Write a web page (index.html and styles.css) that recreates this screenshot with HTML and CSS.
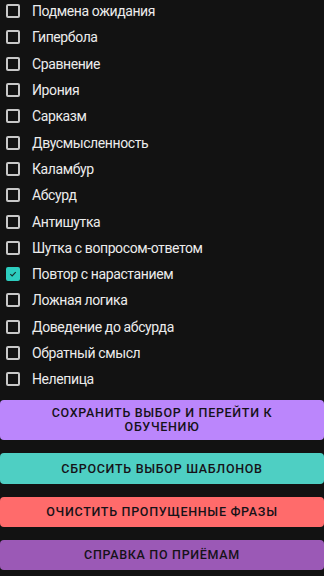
FILE: index.html
```html
<!DOCTYPE html>
<html lang="ru">
<head>
  <meta charset="UTF-8">
  <meta name="viewport" content="width=device-width, initial-scale=1.0">
  <title>Выбор шаблонов</title>
  <link rel="stylesheet" href="styles.css">
</head>
<body>
  <div class="templates">
    <label class="item"><span class="box"></span>Подмена ожидания</label>
    <label class="item"><span class="box"></span>Гипербола</label>
    <label class="item"><span class="box"></span>Сравнение</label>
    <label class="item"><span class="box"></span>Ирония</label>
    <label class="item"><span class="box"></span>Сарказм</label>
    <label class="item"><span class="box"></span>Двусмысленность</label>
    <label class="item"><span class="box"></span>Каламбур</label>
    <label class="item"><span class="box"></span>Абсурд</label>
    <label class="item"><span class="box"></span>Антишутка</label>
    <label class="item"><span class="box"></span>Шутка с вопросом-ответом</label>
    <label class="item"><span class="box checked"><svg viewBox="0 0 14 14" width="14" height="14"><path d="M3.2 7.2 L5.8 9.7 L10.8 4.4" fill="none" stroke="#15302d" stroke-width="1.6"/></svg></span>Повтор с нарастанием</label>
    <label class="item"><span class="box"></span>Ложная логика</label>
    <label class="item"><span class="box"></span>Доведение до абсурда</label>
    <label class="item"><span class="box"></span>Обратный смысл</label>
    <label class="item"><span class="box"></span>Нелепица</label>
  </div>

  <div class="actions">
    <button class="btn btn-save">Сохранить выбор и перейти к обучению</button>
    <button class="btn btn-reset">Сбросить выбор шаблонов</button>
    <button class="btn btn-clear">Очистить пропущенные фразы</button>
    <button class="btn btn-help">Справка по приёмам</button>
  </div>
</body>
</html>
```

FILE: styles.css
```css
body {
  margin: 0;
  background: #121212;
  font-family: Roboto, "Noto Sans", sans-serif;
  color: #ececec;
}
.templates {
  padding: 0 6px 0 6px;
}
.item {
  display: flex;
  align-items: center;
  height: 26.3px;
  font-size: 14px;
  letter-spacing: -0.4px;
}
.item:first-child {
  margin-top: -2px;
}
.box {
  box-sizing: border-box;
  width: 14px;
  height: 14px;
  border: 2px solid #c8c8c8;
  border-radius: 2px;
  margin-right: 12px;
  flex-shrink: 0;
  display: flex;
  align-items: center;
  justify-content: center;
}
.box.checked {
  background: #2dcdbf;
  border-color: #2dcdbf;
}
.box svg {
  display: block;
}
.actions {
  display: flex;
  flex-direction: column;
  gap: 13px;
  margin-top: 8px;
}
.btn {
  display: block;
  width: 100%;
  border: none;
  border-radius: 4px;
  padding: 8px 14px;
  font-family: Roboto, "Noto Sans", sans-serif;
  font-size: 12.5px;
  font-weight: 500;
  letter-spacing: 0.7px;
  line-height: 14px;
  text-transform: uppercase;
  color: #161218;
}
.btn-save {
  background: #bb86fc;
  padding: 6px 30px;
  height: 40px;
}
.btn-reset {
  background: #4ecfc3;
  height: 31px;
}
.btn-clear {
  background: #ff6b6b;
  height: 30px;
}
.btn-help {
  background: #9b59b6;
  height: 30px;
}
```
